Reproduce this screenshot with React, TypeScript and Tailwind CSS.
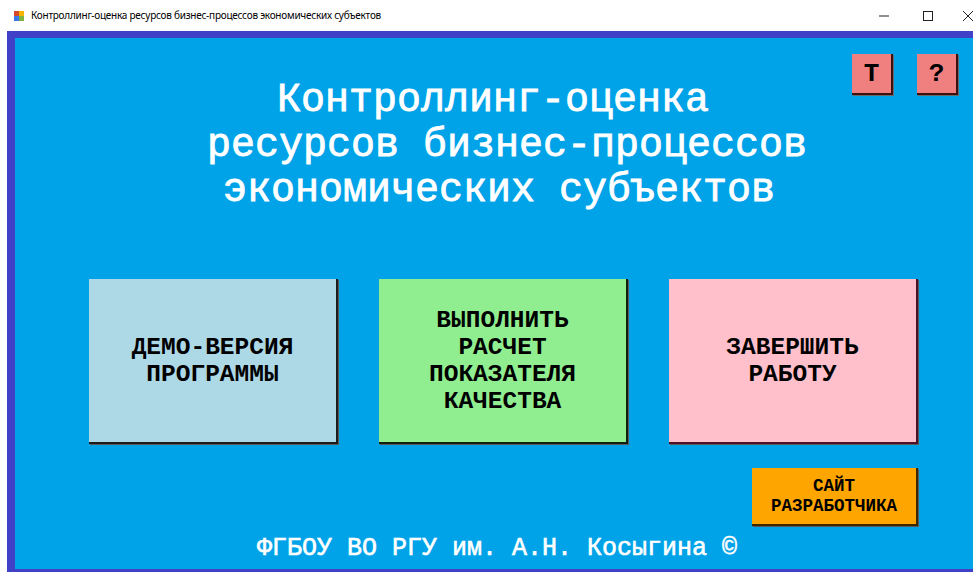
import React from "react";

const mono = "font-['Liberation_Mono','DejaVu_Sans_Mono',monospace]";

function TitleBar() {
  return (
    <div className="flex h-[31px] items-center bg-white">
      <svg className="ml-[14px] h-[10px] w-[10px]" viewBox="0 0 10 10">
        <rect x="0" y="0" width="5" height="5" fill="#d9482b" />
        <rect x="5" y="0" width="5" height="5" fill="#f4b400" />
        <rect x="0" y="5" width="5" height="5" fill="#3b78e7" />
        <rect x="5" y="5" width="5" height="5" fill="#7cb342" />
      </svg>
      <span className="ml-[7px] font-['Noto_Sans',sans-serif] text-[10px] tracking-[-0.25px] text-black">
        Контроллинг-оценка ресурсов бизнес-процессов экономических субъектов
      </span>
      <div className="ml-auto flex items-center">
        <svg className="h-[10px] w-[10px]" viewBox="0 0 10 10">
          <line x1="0" y1="5" x2="10" y2="5" stroke="#222" strokeWidth="1" />
        </svg>
        <svg className="ml-[34px] h-[10px] w-[10px]" viewBox="0 0 10 10">
          <rect x="0.5" y="0.5" width="9" height="9" fill="none" stroke="#222" strokeWidth="1" />
        </svg>
        <svg className="ml-[30px] h-[10px] w-[10px]" viewBox="0 0 10 10">
          <line x1="0" y1="0" x2="10" y2="10" stroke="#222" strokeWidth="1" />
          <line x1="10" y1="0" x2="0" y2="10" stroke="#222" strokeWidth="1" />
        </svg>
      </div>
    </div>
  );
}

function SmallButton({ label }: { label: string }) {
  return (
    <div
      className={`flex h-[41px] w-[41px] items-center justify-center border-b-2 border-r-2 border-[#3a1010] bg-[#f08080] text-[26px] font-bold leading-none text-black shadow-[1px_1px_0_#6b6b6b] ${mono}`}
    >
      {label}
    </div>
  );
}

function BigButton({
  lines,
  bg,
  edge,
}: {
  lines: string[];
  bg: string;
  edge: string;
}) {
  return (
    <div
      className={`flex h-[165px] w-[249px] flex-col items-center justify-center border-b-2 border-r-2 shadow-[1px_1px_0_#5a5a5a] ${bg} ${edge}`}
    >
      {lines.map((l) => (
        <div key={l} className={`text-[24.5px] font-bold leading-[27px] text-black ${mono}`}>
          {l}
        </div>
      ))}
    </div>
  );
}

export default function App() {
  return (
    <div className="h-[572px] w-[973px] overflow-hidden bg-white">
      <TitleBar />
      <div className="ml-[7px] h-[541px] border-b-[3px] border-l-[8px] border-t-[7px] border-[#4141c8] bg-[#00a3e8]">
        <div className="flex flex-col">
          {/* help buttons */}
          <div className="flex justify-end gap-[24px] pr-[15px] pt-[16px]">
            <SmallButton label="T" />
            <SmallButton label="?" />
          </div>

          {/* heading */}
          <div
            className={`mt-[-17px] flex flex-col items-start pl-[192px] text-[40px] font-normal leading-[45px] text-white [-webkit-text-stroke:0.8px_white] ${mono}`}
          >
            <div className="ml-[70px]">Контроллинг-оценка</div>
            <div>ресурсов бизнес-процессов</div>
            <div className="ml-[16px]">экономических субъектов</div>
          </div>

          {/* main actions */}
          <div className="mt-[66px] flex gap-[41px] pl-[74px]">
            <BigButton lines={["ДЕМО-ВЕРСИЯ", "ПРОГРАММЫ"]} bg="bg-[#add8e6]" edge="border-[#1c1c1c]" />
            <BigButton
              lines={["ВЫПОЛНИТЬ", "РАСЧЕТ", "ПОКАЗАТЕЛЯ", "КАЧЕСТВА"]}
              bg="bg-[#90ee90]"
              edge="border-[#102010]"
            />
            <BigButton lines={["ЗАВЕРШИТЬ", "РАБОТУ"]} bg="bg-[#ffc0cb]" edge="border-[#4a1028]" />
          </div>

          <div className="mt-[24px] flex justify-end pr-[55px]">
            <div
              className={`flex h-[58px] w-[166px] flex-col items-center justify-center border-b-2 border-r-2 border-[#3a2800] bg-[#ffa500] text-[17.5px] font-bold leading-[20px] text-black shadow-[1px_1px_0_#5a5a5a] ${mono}`}
            >
              <div>САЙТ</div>
              <div>РАЗРАБОТЧИКА</div>
            </div>
          </div>

          <div
            className={`mt-[9px] pl-[6px] text-center text-[25px] font-normal leading-[28px] text-white [-webkit-text-stroke:0.6px_white] ${mono}`}
          >
            ФГБОУ ВО РГУ им. А.Н. Косыгина ©
          </div>
        </div>
      </div>
    </div>
  );
}
